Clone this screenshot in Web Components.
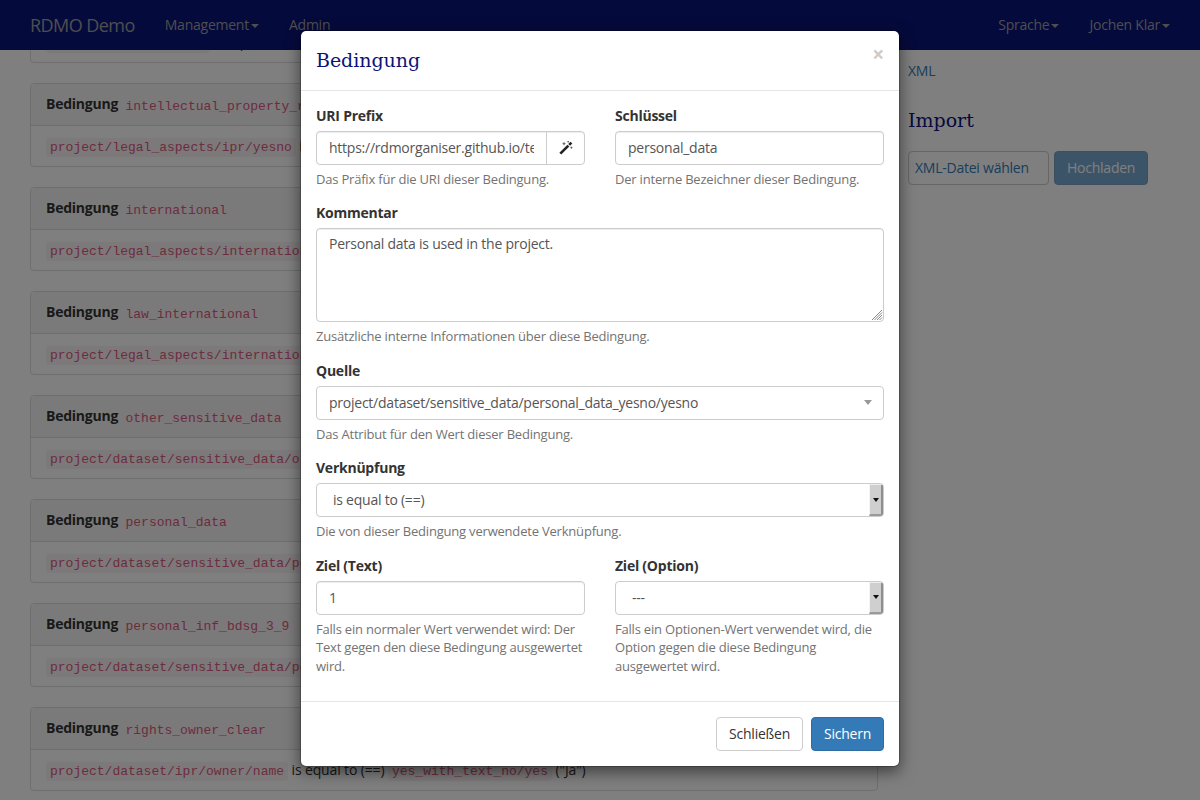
<!DOCTYPE html>
<html lang="de"><head><meta charset="utf-8"><title>RDMO Demo</title>
<style>
html,body{margin:0;height:800px;overflow:hidden;background:#fff;font:14px/1.42857 "Open Sans","Noto Sans",sans-serif;letter-spacing:-.24px;color:#333}
</style></head><body>
<rdmo-app>
  <rdmo-navbar slot="nav"></rdmo-navbar>
  <rdmo-condition key="workflow" path="project/dataset/size" target="yes_no/yes" tl="Ja"></rdmo-condition>
  <rdmo-condition key="intellectual_property_rights" path="project/legal_aspects/ipr/yesno" target="yes_no/yes" tl="Ja"></rdmo-condition>
  <rdmo-condition key="international" path="project/legal_aspects/international/yesno" target="yes_no/yes" tl="Ja"></rdmo-condition>
  <rdmo-condition key="law_international" path="project/legal_aspects/international/law" target="yes_no/yes" tl="Ja"></rdmo-condition>
  <rdmo-condition key="other_sensitive_data" path="project/dataset/sensitive_data/other/yesno" target="yes_no/yes" tl="Ja"></rdmo-condition>
  <rdmo-condition key="personal_data" path="project/dataset/sensitive_data/personal_data_yesno/yesno" target="yes_no/yes" tl="Ja"></rdmo-condition>
  <rdmo-condition key="personal_inf_bdsg_3_9" path="project/dataset/sensitive_data/personal_inf/yesno" target="yes_no/yes" tl="Ja"></rdmo-condition>
  <rdmo-condition key="rights_owner_clear" path="project/dataset/ipr/owner/name" target="yes_with_text_no/yes" tl="Ja"></rdmo-condition>
  <rdmo-sidebar slot="side"></rdmo-sidebar>
</rdmo-app>
<rdmo-modal></rdmo-modal>
<script>
const def=(name,html,attrs)=>customElements.define(name,class extends HTMLElement{
  connectedCallback(){ if(this.shadowRoot) return; const r=this.attachShadow({mode:'open'});
    let h=html; for(const a of (attrs||[])) h=h.split('{{'+a+'}}').join(this.getAttribute(a)||''); r.innerHTML=h; }
});
const caret='<span class="caret"></span>';
const serif='"DejaVu Serif","Liberation Serif",serif';
def('rdmo-app',`<style>
:host{display:block;height:800px;overflow:hidden}
.nav{position:relative;z-index:1}
.wrap{width:1140px;margin:-71px auto 0;padding:0 15px;box-sizing:content-box;display:grid;grid-template-columns:848px 262px;gap:30px}
.main{display:flex;flex-direction:column;gap:20px}
</style><div class="nav"><slot name="nav"></slot></div><div class="wrap"><div class="main"><slot></slot></div><div><slot name="side"></slot></div></div>`);
def('rdmo-navbar',`<style>
:host{display:flex;height:50px;background:#0a1478;padding:0 15px;color:#9d9d9d;align-items:center;box-sizing:border-box}
.b{font-size:18px;padding:0 15px;line-height:50px;letter-spacing:-.55px}
a{padding:0 15px;line-height:50px;display:block}
.s{flex:1}
.caret{display:inline-block;width:0;height:0;margin-left:2px;vertical-align:middle;border-top:4px solid;border-left:4px solid transparent;border-right:4px solid transparent}
</style><div class="b">RDMO Demo</div><a>Management${caret}</a><a>Admin</a><span class="s"></span><a>Sprache${caret}</a><a>Jochen Klar${caret}</a>`);
def('rdmo-condition',`<style>
:host{display:block;border:1px solid #ddd;border-radius:4px;background:#fff;height:84px;box-sizing:border-box;overflow:hidden;white-space:nowrap}
.h{background:#f5f5f5;border-bottom:1px solid #ddd;padding:9px 15px 11px;line-height:21px;height:42px;box-sizing:border-box}
.h code{vertical-align:-1px}
.bd{padding:10px 15px;line-height:20px;letter-spacing:-.14px}
b{font-weight:700}
code{font:13px "Liberation Mono",monospace;letter-spacing:0;background:#f9f2f4;color:#d85a7c;border-radius:4px;padding:2px 4px}
</style><div class="h"><b>Bedingung</b> <code>{{key}}</code></div><div class="bd"><code>{{path}}</code> is equal to (==) <code>{{target}}</code> ("{{tl}}")</div>`,['key','path','target','tl']);
def('rdmo-sidebar',`<style>
:host{display:block;padding-top:82px}
a{color:#337ab7;display:block;line-height:20px}
h2{font:400 19px/26px ${serif};letter-spacing:0;color:#0a1478;margin:26px 0 18px}
.r{display:flex;gap:5px}
.f{box-sizing:border-box;height:34px;width:141px;border:1px solid #ccc;border-radius:4px;padding:0 6px;line-height:32px;color:#337ab7;background:#fff;white-space:nowrap}
.u{box-sizing:border-box;height:34px;padding:0 12px;line-height:32px;border:1px solid #2e6da4;border-radius:4px;background:#337ab7;color:#fff;opacity:.65}
</style><a>XML</a><h2>Import</h2><div class="r"><div class="f">XML-Datei wählen</div><div class="u">Hochladen</div></div>`);
def('rdmo-field',`<style>
:host{display:block;min-width:0}
label{display:block;font-weight:700;line-height:20px;margin-bottom:5px;color:#333}
.h{font-size:13px;letter-spacing:-.2px;color:#737373;margin-top:5px}
</style><label>{{label}}</label><slot></slot><div class="h">{{help}}</div>`,['label','help']);
def('rdmo-input',`<style>
:host{display:block;box-sizing:border-box;height:34px;border:1px solid #ccc;border-radius:4px;background:#fff;padding:0 12px;line-height:32px;color:#555;white-space:nowrap;overflow:hidden;box-shadow:inset 0 1px 1px rgba(0,0,0,.075)}
</style><slot></slot>`);
def('rdmo-wand-input',`<style>
:host{display:flex;box-sizing:border-box;height:34px;border:1px solid #ccc;border-radius:4px;background:#fff;color:#555;box-shadow:inset 0 1px 1px rgba(0,0,0,.075)}
.t{flex:1;min-width:0;margin:0 12px;line-height:32px;white-space:nowrap;overflow:hidden}
.b{width:38px;box-sizing:border-box;border-left:1px solid #ccc;display:flex;align-items:center;justify-content:center}
</style><div class="t"><slot></slot></div><div class="b"><svg width="14" height="14" viewBox="0 0 14 14"><path d="M1.3 12.7 9.4 4.6" stroke="#222" stroke-width="2.6"/><path d="M10.2 3.8 12.4 1.6" stroke="#222" stroke-width="2.6"/><path d="M5 1.2v3M3.5 2.7h3M12.4 5.6v2M11.4 6.6h2M9.2 0v1.4M8.5 .7h1.4" stroke="#555" stroke-width=".9"/></svg></div>`);
def('rdmo-textarea',`<style>
:host{display:block;position:relative;box-sizing:border-box;height:94px;border:1px solid #ccc;border-radius:4px;background:#fff;padding:5px 12px 7px;line-height:20px;color:#555;box-shadow:inset 0 1px 1px rgba(0,0,0,.075)}
svg{position:absolute;right:0;bottom:0}
</style><slot></slot><svg width="12" height="12" viewBox="0 0 12 12"><path d="M11 1 1 11M11 3.5 3.5 11M11 6 6 11M11 8.5 8.5 11" stroke="#8a8a8a" stroke-width="1"/></svg>`);
def('rdmo-select2',`<style>
:host{display:flex;align-items:center;box-sizing:border-box;height:34px;border:1px solid #ccc;border-radius:4px;background:#fff;padding:0 12px;color:#555;line-height:32px}
.t{flex:1}
i{border-top:5px solid #999;border-left:4px solid transparent;border-right:4px solid transparent;margin-right:-1px}
</style><div class="t"><slot></slot></div><i></i>`);
def('rdmo-native-select',`<style>
:host{display:flex;box-sizing:border-box;height:34px;border:1px solid #ccc;border-radius:4px;background:#fff;color:#555;line-height:32px;overflow:hidden}
.t{flex:1;padding-left:16px}
.a{width:14px;background:#cfcfcf;border-right:2px solid #8e8e8e;border-left:1px solid #f4f4f4;border-bottom:2px solid #9a9a9a;border-top:1px solid #eee;box-sizing:border-box;display:flex;align-items:center;justify-content:center}
.a i{border-top:4px solid #111;border-left:3px solid transparent;border-right:3px solid transparent}
</style><div class="t"><slot></slot></div><div class="a"><i></i></div>`);
def('rdmo-modal',`<style>
:host{position:absolute;left:0;top:0;width:1200px;height:800px;background:rgba(0,0,0,.5);z-index:5}
.m{position:absolute;left:300px;top:30px;width:600px;box-sizing:border-box;background:#fff;border:1px solid rgba(0,0,0,.2);background-clip:padding-box;border-radius:6px;box-shadow:0 5px 15px rgba(0,0,0,.5)}
.hd{display:flex;justify-content:space-between;padding:15px;border-bottom:1px solid #e5e5e5}
h4{margin:0;font:400 19px/28.57px ${serif};letter-spacing:-.05px;color:#0a1478}
.x{font-size:21px;font-weight:700;line-height:1;color:#000;opacity:.2;margin-top:-2px}
.bd{padding:15px 15px 10px;display:grid;grid-template-columns:269px 269px;column-gap:30px}
.f{grid-column:1/3}
rdmo-field{margin-bottom:15px}
.ft{display:flex;justify-content:flex-end;gap:8px;padding:15px;border-top:1px solid #e5e5e5}
.btn{box-sizing:border-box;height:34px;padding:0 12px;line-height:32px;border:1px solid #ccc;border-radius:4px;color:#333}
.p{background:#337ab7;border-color:#2e6da4;color:#fff}
</style><div class="m">
<div class="hd"><h4>Bedingung</h4><span class="x">×</span></div>
<div class="bd">
<rdmo-field label="URI Prefix" help="Das Präfix für die URI dieser Bedingung."><rdmo-wand-input>https://rdmorganiser.github.io/terms</rdmo-wand-input></rdmo-field>
<rdmo-field label="Schlüssel" help="Der interne Bezeichner dieser Bedingung."><rdmo-input>personal_data</rdmo-input></rdmo-field>
<rdmo-field class="f" label="Kommentar" help="Zusätzliche interne Informationen über diese Bedingung."><rdmo-textarea>Personal data is used in the project.</rdmo-textarea></rdmo-field>
<rdmo-field class="f" label="Quelle" help="Das Attribut für den Wert dieser Bedingung."><rdmo-select2>project/dataset/sensitive_data/personal_data_yesno/yesno</rdmo-select2></rdmo-field>
<rdmo-field class="f" label="Verknüpfung" help="Die von dieser Bedingung verwendete Verknüpfung."><rdmo-native-select>is equal to (==)</rdmo-native-select></rdmo-field>
<rdmo-field label="Ziel (Text)" help="Falls ein normaler Wert verwendet wird: Der Text gegen den diese Bedingung ausgewertet wird."><rdmo-input>1</rdmo-input></rdmo-field>
<rdmo-field label="Ziel (Option)" help="Falls ein Optionen-Wert verwendet wird, die Option gegen die diese Bedingung ausgewertet wird."><rdmo-native-select>---</rdmo-native-select></rdmo-field>
</div>
<div class="ft"><div class="btn">Schließen</div><div class="btn p">Sichern</div></div>
</div>`);
</script>
</body></html>
